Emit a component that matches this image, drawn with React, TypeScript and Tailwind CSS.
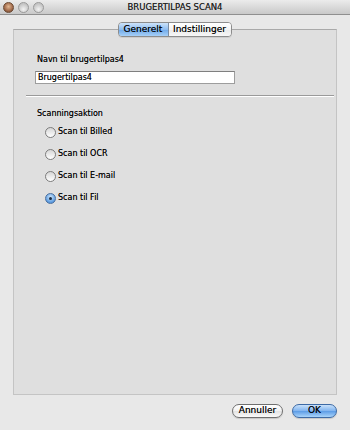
import React from "react";

function Radio({ label, checked }: { label: string; checked?: boolean }) {
  return (
    <div className="flex items-center h-[22px]">
      {checked ? (
        <span className="w-[11px] h-[11px] rounded-full border border-[#4a6f9e] bg-[radial-gradient(circle_at_50%_35%,#cfe6fb,#5b9be0_70%,#3f7fcf)] flex items-center justify-center">
          <span className="w-[3px] h-[3px] rounded-full bg-[#1b2b40]" />
        </span>
      ) : (
        <span className="w-[11px] h-[11px] rounded-full border border-[#7c7c7c] bg-[linear-gradient(#d6d6d6,#ffffff)]" />
      )}
      <span className="ml-[2px] text-[8px] text-black [text-shadow:0_0_0.4px_rgba(0,0,0,0.6)]">{label}</span>
    </div>
  );
}

export default function App() {
  return (
    <div className="w-[350px] h-[430px] bg-[#e8e8e8] flex flex-col font-['DejaVu_Sans',sans-serif] overflow-hidden">
      {/* Title bar */}
      <div className="h-[15px] shrink-0 bg-[linear-gradient(#ececec,#c9c9c9)] border-b border-[#8f8f8f] flex items-center relative">
        <div className="flex items-center gap-[4px] pl-[3px]">
          <span className="w-[11px] h-[11px] rounded-full border border-[#6b4a33] bg-[radial-gradient(circle_at_50%_40%,#e2b893,#a0694a_60%,#5e3a25)]" />
          <span className="w-[11px] h-[11px] rounded-full border border-[#9a9a9a] bg-[radial-gradient(circle_at_50%_70%,#f2f2f2,#c4c4c4_70%)]" />
          <span className="w-[11px] h-[11px] rounded-full border border-[#9a9a9a] bg-[radial-gradient(circle_at_50%_70%,#f2f2f2,#c4c4c4_70%)]" />
        </div>
        <div className="absolute inset-0 flex items-center justify-center text-[8.5px] text-[#222] [text-shadow:0_0_0.4px_rgba(0,0,0,0.6)]">
          BRUGERTILPAS SCAN4
        </div>
      </div>

      {/* Tabs */}
      <div className="mt-[7px] flex justify-center relative z-10">
        <div className="ml-[-1px] flex h-[15px] rounded-[4px] border border-[#8c8c8c] overflow-hidden shadow-[0_1px_0_rgba(0,0,0,0.08)]">
          <div className="w-[50px] flex items-center justify-center text-[9px] text-black [text-shadow:0_0_0.4px_rgba(0,0,0,0.6)] bg-[linear-gradient(#cde3fa,#8fbdf0_50%,#6ea9ea_51%,#a7d0f7)] border-r border-[#7a8ca3]">
            Generelt
          </div>
          <div className="w-[62px] flex items-center justify-center text-[9px] text-black [text-shadow:0_0_0.4px_rgba(0,0,0,0.6)] bg-[linear-gradient(#ffffff,#f4f4f4_50%,#e9e9e9_51%,#f7f7f7)]">
            Indstillinger
          </div>
        </div>
      </div>

      {/* Panel */}
      <div className="mt-[-8px] ml-[13px] w-[324px] h-[366px] bg-[#dfdfdf] border border-[#c4c4c4] border-t-[#a9a9a9] flex flex-col">
        <div className="mt-[23px] ml-[23px] text-[8px] text-black leading-[14px] [text-shadow:0_0_0.4px_rgba(0,0,0,0.6)]">
          Navn til brugertilpas4
        </div>
        <div className="mt-[4px] ml-[21px] w-[200px] h-[13px] bg-white border border-[#9d9d9d] border-t-[#7f7f7f] flex items-center pl-[2px] text-[8px] text-black [text-shadow:0_0_0.4px_rgba(0,0,0,0.6)]">
          Brugertilpas4
        </div>
        <div className="mt-[11px] ml-[12px] mr-[2px] h-[2px] border-t border-[#9a9a9a] border-b-white border-b" />
        <div className="mt-[10px] ml-[23px] text-[8px] text-black leading-[14px] [text-shadow:0_0_0.4px_rgba(0,0,0,0.6)]">
          Scanningsaktion
        </div>
        <div className="mt-0 ml-[31px] flex flex-col">
          <Radio label="Scan til Billed" />
          <Radio label="Scan til OCR" />
          <Radio label="Scan til E-mail" />
          <Radio label="Scan til Fil" checked />
        </div>
      </div>

      {/* Buttons */}
      <div className="mt-[9px] flex justify-end pr-[13px] gap-[9px]">
        <button className="w-[51px] h-[14px] rounded-full border border-[#6f6f6f] bg-[linear-gradient(#ffffff,#f1f1f1_50%,#e2e2e2_51%,#fafafa)] text-[9px] text-black [text-shadow:0_0_0.4px_rgba(0,0,0,0.6)] flex items-center justify-center shadow-[0_1px_1px_rgba(0,0,0,0.15)]">
          Annuller
        </button>
        <button className="w-[45px] h-[14px] rounded-full border border-[#3d6aa5] bg-[linear-gradient(#c9e1fa,#7fb3ef_50%,#5b9be6_51%,#a9d4fa)] text-[9px] text-black [text-shadow:0_0_0.4px_rgba(0,0,0,0.6)] flex items-center justify-center shadow-[0_1px_1px_rgba(0,0,0,0.15)]">
          OK
        </button>
      </div>
    </div>
  );
}
